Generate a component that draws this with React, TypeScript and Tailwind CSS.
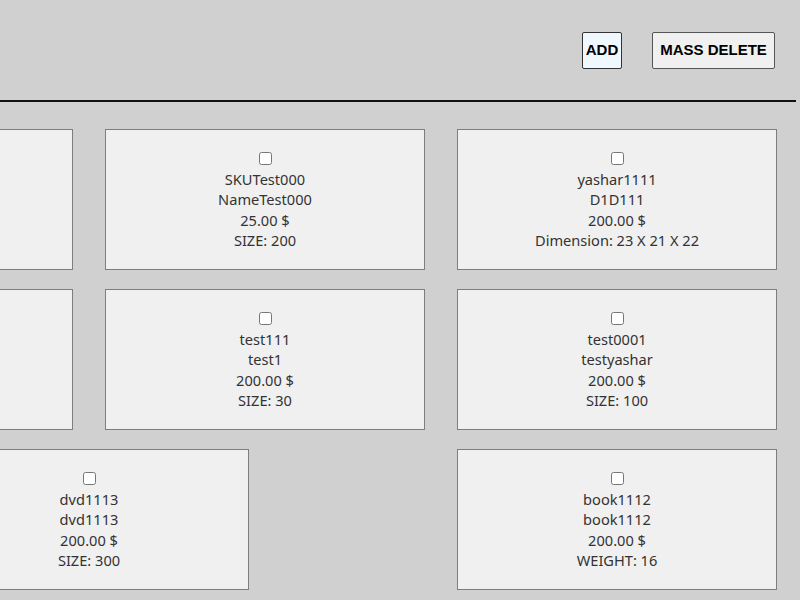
import React from "react";

interface Product {
  sku: string;
  name: string;
  price: string;
  attr: string;
  col: string;
}

// the list is wider than the window; the first column sits off to the left,
// so those cards are drawn as empty shells
const products: (Product | { col: string; sku: string; hidden: true })[] = [
  { sku: "off-1", col: "col-start-1", hidden: true },
  { sku: "SKUTest000", name: "NameTest000", price: "25.00 $", attr: "SIZE: 200", col: "col-start-3" },
  { sku: "yashar1111", name: "D1D111", price: "200.00 $", attr: "Dimension: 23 X 21 X 22", col: "col-start-5" },
  { sku: "off-2", col: "col-start-1", hidden: true },
  { sku: "test111", name: "test1", price: "200.00 $", attr: "SIZE: 30", col: "col-start-3" },
  { sku: "test0001", name: "testyashar", price: "200.00 $", attr: "SIZE: 100", col: "col-start-5" },
  { sku: "dvd1113", name: "dvd1113", price: "200.00 $", attr: "SIZE: 300", col: "col-start-2" },
  { sku: "book1112", name: "book1112", price: "200.00 $", attr: "WEIGHT: 16", col: "col-start-5" },
];

function ProductCard({ product }: { product: (typeof products)[number] }) {
  return (
    <div
      className={`${product.col} col-span-2 h-[141px] border border-[#7d7d7d] bg-[#f0f0f0] flex flex-col items-center pt-[22px] text-[14.6px] leading-[20.4px] text-[#333]`}
    >
      {!("hidden" in product) && (
        <>
          <input type="checkbox" className="h-[13px] w-[13px] mb-[4px]" />
          <div>{product.sku}</div>
          <div>{product.name}</div>
          <div>{product.price}</div>
          <div>{product.attr}</div>
        </>
      )}
    </div>
  );
}

export default function App() {
  return (
    <div className="w-[800px] h-[600px] overflow-hidden bg-[#cfd0cf] font-['Noto_Sans',sans-serif]">
      <header className="h-[100px] flex items-start justify-end gap-[30px] pt-[32px] pr-[25px]">
        <button className="h-[37px] w-[40px] border border-[#333] rounded-[2px] bg-[#f0f8ff] text-[15px] font-bold text-black font-['Liberation_Sans',sans-serif]">
          ADD
        </button>
        <button className="h-[37px] w-[123px] border border-[#555] rounded-[2px] bg-[#f0f0f0] text-[15px] font-bold text-black font-['Liberation_Sans',sans-serif]">
          MASS DELETE
        </button>
      </header>
      <hr className="w-[796px] border-0 h-[2px] bg-[#111]" />
      <main className="ml-[-247px] mt-[27px] grid grid-cols-[repeat(6,144px)] gap-x-[32px] gap-y-[19px]">
        {products.map((p) => (
          <ProductCard key={p.sku} product={p} />
        ))}
      </main>
    </div>
  );
}
